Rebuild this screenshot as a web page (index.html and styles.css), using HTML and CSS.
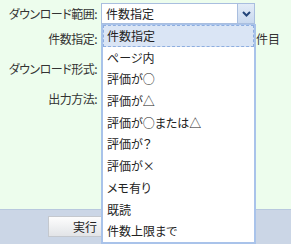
FILE: index.html
```html
<!DOCTYPE html>
<html lang="ja">
<head>
  <meta charset="UTF-8" />
  <title>ダウンロード</title>
  <link rel="stylesheet" href="styles.css">
</head>
<body>
  <div class="dl-panel">
    <div class="dl-form">
      <div class="dl-label">ダウンロード範囲:</div>
      <div class="dl-field">
        <div class="dl-select">
          <span class="dl-select-text">件数指定</span>
          <span class="dl-select-btn">
            <svg width="9" height="6" viewBox="0 0 9 6"><path d="M1 1 L4.5 4.5 L8 1" fill="none" stroke="#23457a" stroke-width="2"/></svg>
          </span>
          <ul class="dl-options">
            <li class="selected">件数指定</li>
            <li>ページ内</li>
            <li>評価が○</li>
            <li>評価が△</li>
            <li>評価が○または△</li>
            <li>評価が？</li>
            <li>評価が×</li>
            <li>メモ有り</li>
            <li>既読</li>
            <li>件数上限まで</li>
          </ul>
        </div>
      </div>

      <div class="dl-label">件数指定:</div>
      <div class="dl-field dl-count">
        <span class="dl-unit">件目</span>
      </div>

      <div class="dl-label">ダウンロード形式:</div>
      <div class="dl-field"></div>

      <div class="dl-label">出力方法:</div>
      <div class="dl-field"></div>
    </div>

    <div class="dl-footer">
      <button class="dl-run">実行</button>
    </div>
  </div>
</body>
</html>
```

FILE: styles.css
```css
body {
  margin: 0;
  padding: 0;
  background-color: #edfded;
  font-family: "Noto Sans CJK JP", "DejaVu Sans", sans-serif;
  font-size: 12px;
  font-feature-settings: "palt";
  color: #333;
}

.dl-panel {
  height: 244px;
  display: flex;
  flex-direction: column;
}

.dl-form {
  display: grid;
  grid-template-columns: 101px 1fr;
  grid-template-rows: 21px 29px 31px 28px;
  padding-top: 3px;
  flex: 1;
}

.dl-label {
  padding-right: 4px;
  display: flex;
  align-items: center;
  justify-content: flex-end;
  white-space: nowrap;
  letter-spacing: -0.5px;
}

.dl-field {
  display: flex;
  align-items: center;
}

.dl-select {
  position: relative;
  width: 154px;
  height: 21px;
  box-sizing: border-box;
  border: 1px solid #a9bedf;
  background: #fff;
  display: flex;
  align-items: center;
}

.dl-select-text {
  flex: 1;
  padding-left: 4px;
  color: #222;
}

.dl-select-btn {
  width: 17px;
  height: 19px;
  box-sizing: border-box;
  border-left: 1px solid #a9bedf;
  background: linear-gradient(#e3ecf8, #c9d9ef);
  display: flex;
  align-items: center;
  justify-content: center;
}

.dl-options {
  position: absolute;
  top: 20px;
  left: -1px;
  width: 155px;
  box-sizing: border-box;
  margin: 0;
  padding: 0;
  list-style: none;
  background: #fff;
  border: 2px solid #a9c3ea;
  border-top-width: 1px;
}

.dl-options li {
  height: 21.7px;
  line-height: 19px;
  padding-left: 3px;
  color: #222;
  border: 1px solid transparent;
  box-sizing: border-box;
  white-space: nowrap;
}

.dl-options li.selected {
  background: #dae5f5;
  border: 1px dashed #8eaee0;
}

.dl-count {
  justify-content: flex-end;
  padding-right: 11px;
}

.dl-unit {
  color: #333;
}

.dl-footer {
  height: 35px;
  box-sizing: border-box;
  background: #cbd6e6;
  border-top: 1px solid #b8c8de;
  padding: 6px 0 0 48px;
}

.dl-run {
  width: 80px;
  height: 21px;
  border: 1px solid #c4c8ce;
  background: linear-gradient(#fdfdfd, #e2e4e7);
  font-family: inherit;
  font-size: 12px;
  font-feature-settings: "palt";
  color: #222;
  text-align: left;
  padding-left: 24px;
}
```
